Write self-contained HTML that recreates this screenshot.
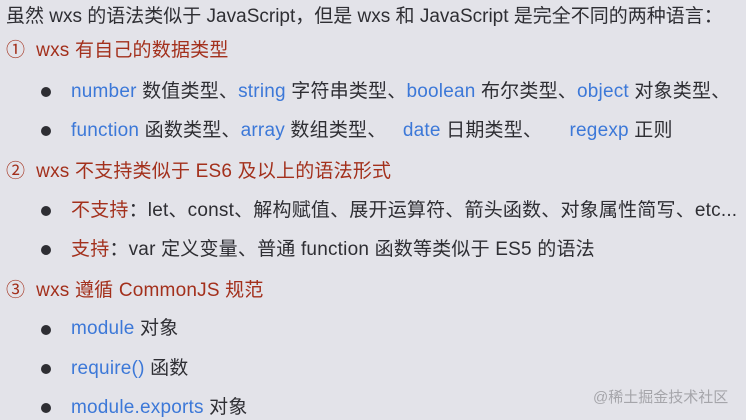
<!DOCTYPE html>
<html><head><meta charset="utf-8"><style>
html,body{margin:0;padding:0}
body{width:746px;height:419px;overflow:hidden;background:#e3e3e9;font-family:"Liberation Sans","Noto Sans CJK SC",sans-serif;font-size:19px;letter-spacing:0.2px;color:#2e2e33;position:relative}
.l{position:absolute;white-space:nowrap;line-height:24px}
.h{color:#a3301c}
.b{color:#3c78d8}
.dot{position:absolute;width:10px;height:10px;border-radius:50%;background:#2e2e33}
.wm{position:absolute;left:593px;top:386px;font-size:15px;letter-spacing:0;color:#a5a5aa}
</style></head><body>
<div class="l" style="left:6px;top:5px;letter-spacing:0">虽然 wxs 的语法类似于 JavaScript，但是 wxs 和 JavaScript 是完全不同的两种语言：</div>
<div class="l h" style="left:6px;top:39px">①&nbsp; wxs 有自己的数据类型</div>
<div class="dot" style="left:41px;top:87px"></div>
<div class="l" style="left:71px;top:80px"><span class="b">number</span> 数值类型、<span class="b">string</span> 字符串类型、<span class="b">boolean</span> 布尔类型、<span class="b">object</span> 对象类型、</div>
<div class="dot" style="left:41px;top:126px"></div>
<div class="l" style="left:71px;top:119px"><span class="b">function</span> 函数类型、<span class="b">array</span> 数组类型、&nbsp;&nbsp; <span class="b">date</span> 日期类型、&nbsp;&nbsp;&nbsp;&nbsp; <span class="b">regexp</span> 正则</div>
<div class="l h" style="left:6px;top:160px">②&nbsp; wxs 不支持类似于 ES6 及以上的语法形式</div>
<div class="dot" style="left:41px;top:206px"></div>
<div class="l" style="left:71px;top:199px"><span class="h">不支持</span>：let、const、解构赋值、展开运算符、箭头函数、对象属性简写、etc...</div>
<div class="dot" style="left:41px;top:245px"></div>
<div class="l" style="left:71px;top:238px"><span class="h">支持</span>：var 定义变量、普通 function 函数等类似于 ES5 的语法</div>
<div class="l h" style="left:6px;top:279px">③&nbsp; wxs 遵循 CommonJS 规范</div>
<div class="dot" style="left:41px;top:325px"></div>
<div class="l" style="left:71px;top:317px"><span class="b">module</span> 对象</div>
<div class="dot" style="left:41px;top:364px"></div>
<div class="l" style="left:71px;top:357px"><span class="b">require()</span> 函数</div>
<div class="dot" style="left:41px;top:403px"></div>
<div class="l" style="left:71px;top:396px"><span class="b">module.exports</span> 对象</div>
<div class="wm">@稀土掘金技术社区</div>
</body></html>
